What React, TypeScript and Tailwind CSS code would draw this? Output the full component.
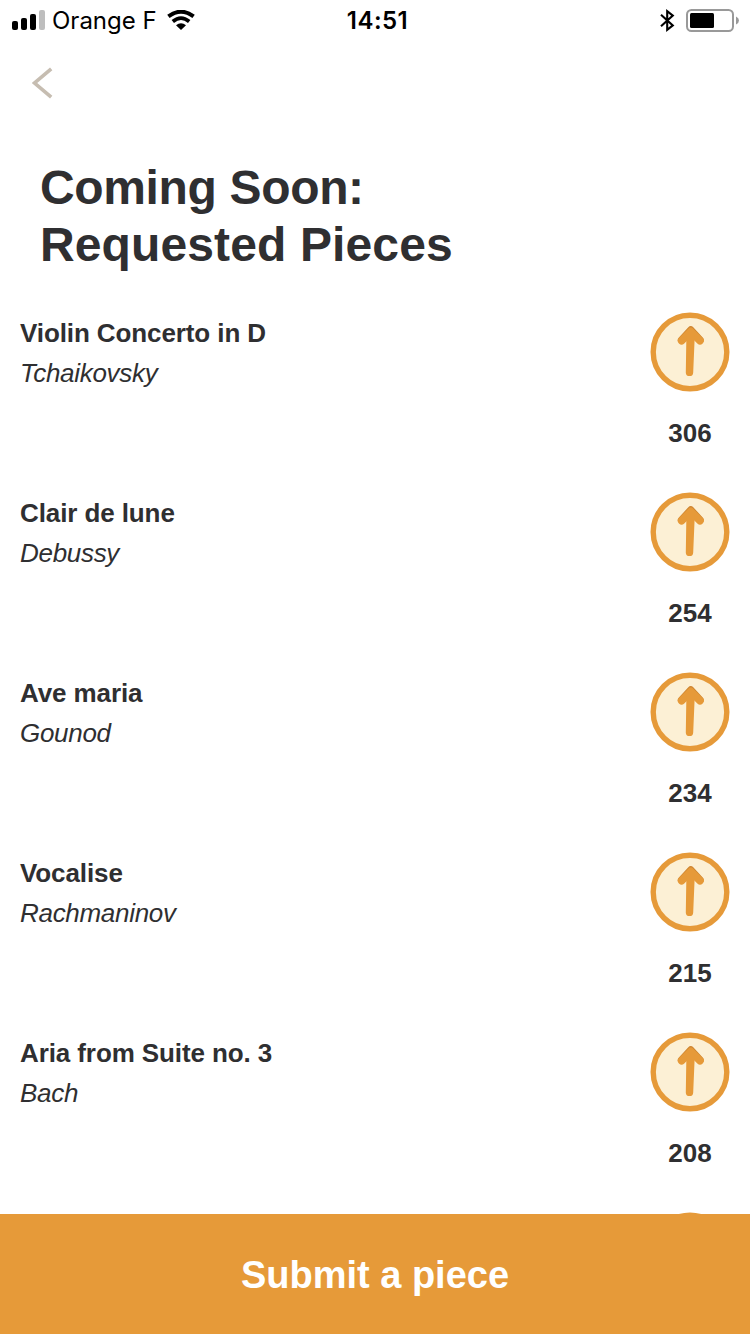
import React from 'react';

interface Piece {
  title: string;
  composer: string;
  votes: number;
}

const pieces: Piece[] = [
  { title: 'Violin Concerto in D', composer: 'Tchaikovsky', votes: 306 },
  { title: 'Clair de lune', composer: 'Debussy', votes: 254 },
  { title: 'Ave maria', composer: 'Gounod', votes: 234 },
  { title: 'Vocalise', composer: 'Rachmaninov', votes: 215 },
  { title: 'Aria from Suite no. 3', composer: 'Bach', votes: 208 },
];

const UpvoteIcon = () => (
  <svg className="block size-20" viewBox="0 0 80 80" fill="none">
    <circle cx="40" cy="40" r="36.8" fill="#fcf0d5" stroke="#e69a39" strokeWidth="5.4" />
    <path d="M31.6 28 L40.8 18 L50 28" stroke="#cf8630" strokeWidth="7.4" strokeLinecap="round" strokeLinejoin="round" />
    <path d="M31.6 28.8 L40.8 19.6 L50 28.8" stroke="#e69a39" strokeWidth="7.6" strokeLinecap="round" strokeLinejoin="round" />
    <path d="M36.4 23 H44.8 L43.2 60.4 A3.7 3.7 0 0 1 35.8 60.4 Z" fill="#e69a39" />
  </svg>
);

const StatusBar = () => (
  <div className="flex h-10 items-center justify-between font-['Inter',sans-serif] text-black">
    <div className="flex flex-1 items-center pl-3">
      <svg className="h-5 w-[33px]" viewBox="0 0 33 20">
        <rect x="0" y="11" width="6" height="9" rx="2" />
        <rect x="9" y="8" width="6" height="12" rx="2" />
        <rect x="18" y="4" width="6" height="16" rx="2" />
        <rect x="27" y="0" width="6" height="20" rx="2" fill="#bebebe" />
      </svg>
      <span className="ml-[7px] w-[104px] pt-0.5 text-2xl/10 whitespace-nowrap">Orange F</span>
      <svg className="ml-[11px] h-5 w-7" viewBox="0 0 28 20">
        <path d="M1.4 6.4 Q14 -3 26.6 6.4" fill="none" stroke="#000" strokeWidth="4" />
        <path d="M5.8 11.4 Q14 4.8 22.2 11.4" fill="none" stroke="#000" strokeWidth="3.8" />
        <path d="M9 15.3 Q14 11.4 19 15.3 L14 20 Z" />
      </svg>
    </div>
    <span className="pt-0.5 pl-[3px] text-2xl/10 font-semibold tracking-[0.45px]">14:51</span>
    <div className="flex flex-1 items-center justify-end pt-px pr-2.5">
      <svg className="mr-[11px] h-[23px] w-[15px]" viewBox="0 0 15 23" fill="none" stroke="#000" strokeWidth="2.1">
        <path d="M1 5.8 L12.8 16.4 L7.2 20.8 V2.2 L12.8 6.6 L1 17.2" />
      </svg>
      <svg className="h-[23px] w-[54px]" viewBox="0 0 54 23">
        <rect x="1" y="1" width="46" height="21" rx="4.5" fill="none" stroke="#999" strokeWidth="2" />
        <rect x="4" y="4" width="24" height="15" rx="1.5" />
        <path d="M50 7.5 Q53 9 53 11.5 Q53 14 50 15.5 Z" fill="#999" />
      </svg>
    </div>
  </div>
);

const PieceRow: React.FC<{ piece: Piece }> = ({ piece }) => (
  <li className="flex h-[180px] justify-between px-5">
    <div className="pt-px">
      <h2 className="text-[26px]/10 font-bold tracking-[-0.1px]">{piece.title}</h2>
      <p className="text-[26px]/10 tracking-[-0.3px] italic">{piece.composer}</p>
    </div>
    <div className="flex w-20 flex-col items-center">
      <button type="button" aria-label="Upvote">
        <UpvoteIcon />
      </button>
      <span className="mt-[21px] text-[26px]/10 font-bold">{piece.votes}</span>
    </div>
  </li>
);

const App: React.FC = () => {
  return (
    <div className="flex h-[1334px] w-[750px] flex-col overflow-hidden bg-white font-['Liberation_Sans',Arial,sans-serif] text-[#2f2f31]">
      <StatusBar />
      <nav className="flex h-[119px] pt-[27px] pl-8">
        <button type="button" aria-label="Back" className="size-8">
          <svg className="size-8" viewBox="0 0 32 32" fill="none" stroke="#c6bdb1" strokeWidth="3.6">
            <path d="M19.2 1.8 L2.6 16 L19.2 30.2" />
          </svg>
        </button>
      </nav>
      <h1 className="h-[153px] pl-10 text-5xl/[57px] font-bold">
        <span className="block tracking-[-0.35px]">Coming Soon:</span>
        <span className="block tracking-[0.12px]">Requested Pieces</span>
      </h1>
      <main className="min-h-0 flex-1 overflow-hidden">
        <ul>
          {pieces.map((piece) => (
            <PieceRow key={piece.title} piece={piece} />
          ))}
          <li className="flex justify-end px-5">
            <UpvoteIcon />
          </li>
        </ul>
      </main>
      <button type="button" className="h-[120px] shrink-0 bg-[#e69a39] pt-0.5 text-[38px] font-bold text-white">
        Submit a piece
      </button>
    </div>
  );
};

export default App;
